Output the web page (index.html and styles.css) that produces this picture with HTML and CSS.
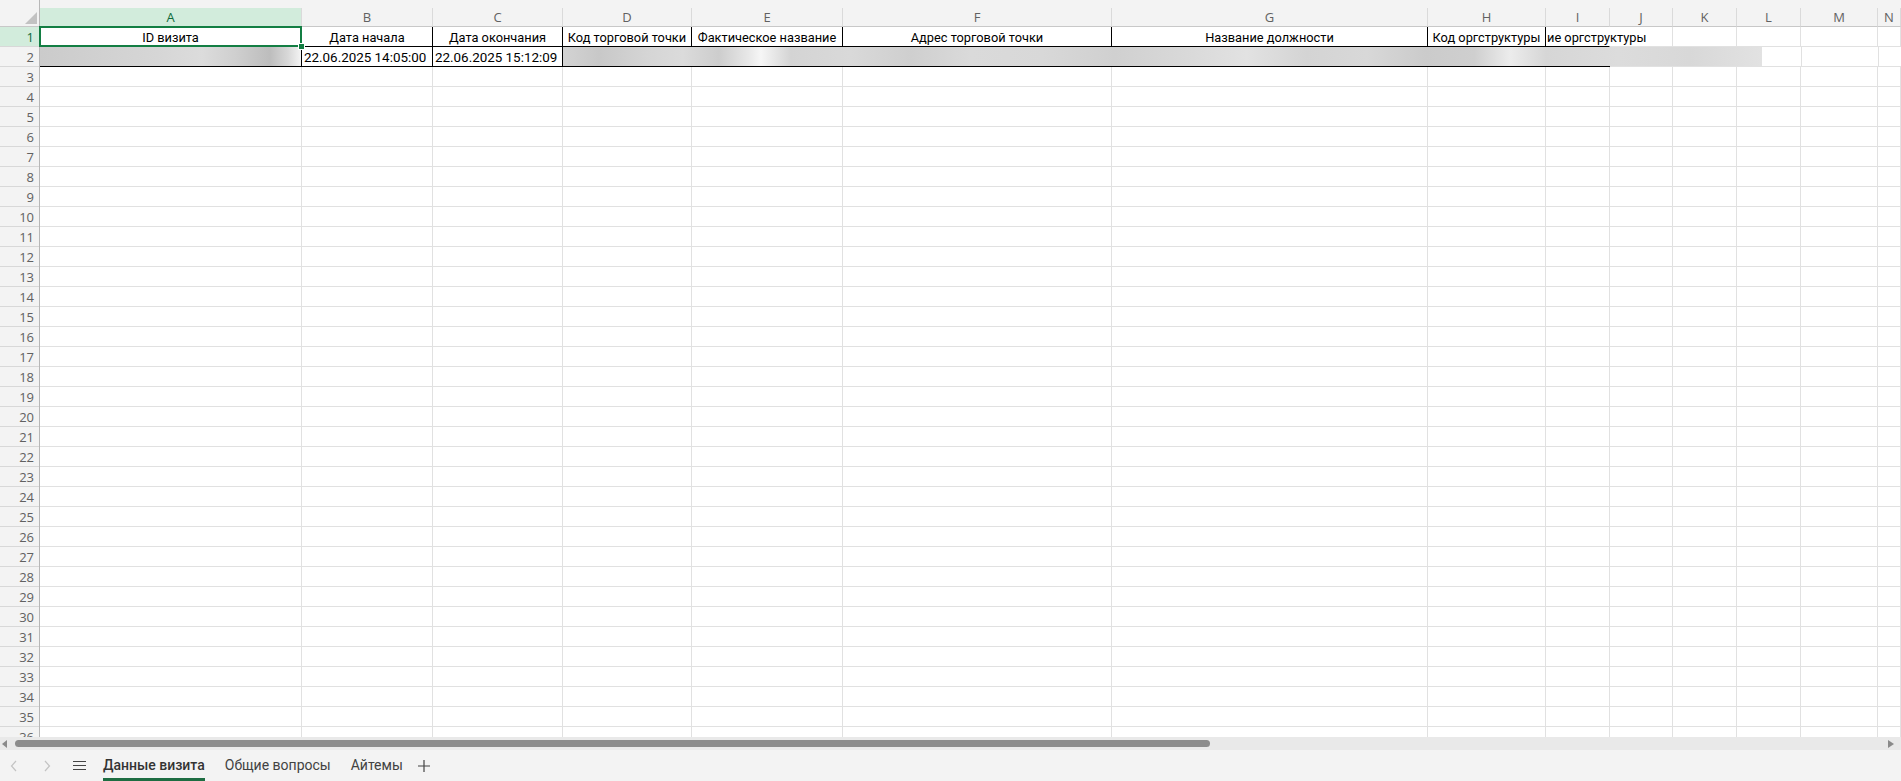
FILE: index.html
```html
<!DOCTYPE html>
<html lang="ru">
<head>
<meta charset="utf-8">
<title>Данные визита</title>
<link rel="stylesheet" href="styles.css">
</head>
<body>
<div class="app">
  <div class="sheet">
    <div class="topstrip"><div class="ts-corner"></div><div class="ts-rest"></div></div>
    <div class="colheads">
      <div class="corner">
        <svg width="40" height="19" viewBox="0 0 40 19"><polygon points="37,4 37,16 25,16" fill="#c2c2c2"/></svg>
      </div>
      <div class="ch w-a sel">A</div>
      <div class="ch w-b">B</div>
      <div class="ch w-c">C</div>
      <div class="ch w-d">D</div>
      <div class="ch w-e">E</div>
      <div class="ch w-f">F</div>
      <div class="ch w-g">G</div>
      <div class="ch w-h">H</div>
      <div class="ch w-i">I</div>
      <div class="ch w-j">J</div>
      <div class="ch w-k">K</div>
      <div class="ch w-l">L</div>
      <div class="ch w-m">M</div>
      <div class="ch w-n">N</div>
    </div>
    <div class="main">
      <div class="rowheads">
        <div class="rh sel">1</div><div class="rh">2</div><div class="rh">3</div><div class="rh">4</div>
        <div class="rh">5</div><div class="rh">6</div><div class="rh">7</div><div class="rh">8</div>
        <div class="rh">9</div><div class="rh">10</div><div class="rh">11</div><div class="rh">12</div>
        <div class="rh">13</div><div class="rh">14</div><div class="rh">15</div><div class="rh">16</div>
        <div class="rh">17</div><div class="rh">18</div><div class="rh">19</div><div class="rh">20</div>
        <div class="rh">21</div><div class="rh">22</div><div class="rh">23</div><div class="rh">24</div>
        <div class="rh">25</div><div class="rh">26</div><div class="rh">27</div><div class="rh">28</div>
        <div class="rh">29</div><div class="rh">30</div><div class="rh">31</div><div class="rh">32</div>
        <div class="rh">33</div><div class="rh">34</div><div class="rh">35</div><div class="rh">36</div>
      </div>
      <div class="cells">
        <div class="row">
          <div class="c w-a center bb br">ID визита</div>
          <div class="c w-b center bb br">Дата начала</div>
          <div class="c w-c center bb br">Дата окончания</div>
          <div class="c w-d center bb br">Код торговой точки</div>
          <div class="c w-e center bb br">Фактическое название</div>
          <div class="c w-f center bb br">Адрес торговой точки</div>
          <div class="c w-g center bb br">Название должности</div>
          <div class="c w-h center bb br">Код оргструктуры</div>
          <div class="c w-i bb nobr overflow">ие оргструктуры</div>
          <div class="c w-j"></div>
          <div class="c w-k"></div>
          <div class="c w-l"></div>
          <div class="c w-m"></div>
          <div class="c w-n"></div>
        </div>
        <div class="row">
          <div class="c w-a bb br blur-a"></div>
          <div class="c w-b bb br num">22.06.2025 14:05:00</div>
          <div class="c w-c bb br num">22.06.2025 15:12:09</div>
          <div class="c blur-wide"></div>
          <div class="c w-l-rest"></div>
          <div class="c w-m"></div>
          <div class="c w-n"></div>
        </div>
        <div class="rest">
          <div class="col w-a"></div>
          <div class="col w-b"></div>
          <div class="col w-c"></div>
          <div class="col w-d"></div>
          <div class="col w-e"></div>
          <div class="col w-f"></div>
          <div class="col w-g"></div>
          <div class="col w-h"></div>
          <div class="col w-i"></div>
          <div class="col w-j"></div>
          <div class="col w-k"></div>
          <div class="col w-l"></div>
          <div class="col w-m"></div>
          <div class="col w-n"></div>
        </div>
        <div class="selection"></div>
        <div class="handle"></div>
      </div>
    </div>
  </div>
  <div class="hscroll">
    <svg class="arr-l" width="8" height="12" viewBox="0 0 8 12"><polygon points="6,2 6,10 1,6" fill="#8a8a8a"/></svg>
    <div class="thumb"></div>
    <svg class="arr-r" width="10" height="12" viewBox="0 0 10 12"><polygon points="2,2 2,10 8,6" fill="#8a8a8a"/></svg>
  </div>
  <div class="tabbar">
    <svg class="nav nav-prev" width="8" height="12" viewBox="0 0 8 12"><polyline points="6,1 1.5,6 6,11" fill="none" stroke="#c3c3c3" stroke-width="1.2"/></svg>
    <svg class="nav nav-next" width="8" height="12" viewBox="0 0 8 12"><polyline points="2,1 6.5,6 2,11" fill="none" stroke="#c3c3c3" stroke-width="1.2"/></svg>
    <svg class="menu" width="13" height="11" viewBox="0 0 13 11"><path d="M0 1.5H13M0 5.5H13M0 9.5H13" stroke="#444" stroke-width="1.2"/></svg>
    <div class="tab active">Данные визита</div>
    <div class="tab">Общие вопросы</div>
    <div class="tab">Айтемы</div>
    <svg class="plus" width="12" height="12" viewBox="0 0 12 12"><path d="M6 0V12M0 6H12" stroke="#444" stroke-width="1.2"/></svg>
  </div>
</div>
</body>
</html>
```
FILE: styles.css
```css
* { box-sizing: border-box; }
html, body { margin: 0; padding: 0; }
body {
  width: 1901px;
  height: 781px;
  overflow: hidden;
  background: #ffffff;
  font-family: "Open Sans", "Noto Sans", "DejaVu Sans", sans-serif;
}
.app { display: flex; flex-direction: column; width: 1901px; height: 781px; }

.sheet { height: 737px; overflow: hidden; display: flex; flex-direction: column; flex: none; }

.topstrip { height: 8px; display: flex; background: #f3f3f3; flex: none; }
.ts-corner { width: 40px; border-right: 1px solid #b7b7b7; }
.ts-rest { flex: 1; }

.colheads { height: 19px; display: flex; background: #f3f3f3; flex: none; }
.corner { width: 40px; border-right: 1px solid #b7b7b7; border-bottom: 1px solid #c8c8c8; flex: none; }
.corner svg { display: block; }
.ch {
  flex: none;
  height: 19px;
  border-right: 1px solid #dadada;
  border-bottom: 1px solid #c8c8c8;
  color: #616161;
  font-size: 13px;
  line-height: 18px;
  text-align: center;
}
.ch.sel { background: #d2ecdc; color: #0f6b3b; border-bottom-color: #c8c8c8; }

.w-a { width: 262px; }
.w-b { width: 131px; }
.w-c { width: 130px; }
.w-d { width: 129px; }
.w-e { width: 151px; }
.w-f { width: 269px; }
.w-g { width: 316px; }
.w-h { width: 118px; }
.w-i { width: 64px; }
.w-j { width: 63px; }
.w-k { width: 64px; }
.w-l { width: 64px; }
.w-m { width: 77px; }
.w-n { width: 23px; }

.main { display: flex; flex: none; }
.rowheads { width: 40px; flex: none; background: #f3f3f3; border-right: 1px solid #b7b7b7; }
.rh {
  height: 20px;
  border-bottom: 1px solid #d8d8d8;
  color: #616161;
  font-size: 13px;
  line-height: 20px;
  text-align: right;
  padding-right: 5px;
}
.rh.sel { background: #d2ecdc; color: #0f6b3b; }

.cells { position: relative; flex: none; width: 1861px; }
.row { display: flex; height: 20px; }
.c {
  flex: none;
  height: 20px;
  border-right: 1px solid #e1e1e1;
  border-bottom: 1px solid #e1e1e1;
  font-family: Roboto, "Open Sans", sans-serif;
  font-size: 12.8px;
  color: #000;
  line-height: 19px;
  padding: 1px 2px 0 2px;
  white-space: nowrap;
  overflow: hidden;
}
.c.num { font-size: 13.4px; padding-left: 2px; }
.c.center { text-align: center; padding-left: 0; padding-right: 0; }
.c.bb { border-bottom-color: #000; }
.c.br { border-right-color: #000; }
.c.nobr { border-right-color: transparent; }
.c.overflow { overflow: visible; position: relative; z-index: 1; padding-left: 1px; }

.blur-a {
  background: linear-gradient(90deg, #cbcbcb 0%, #d0d0d0 20%, #d6d6d6 45%, #dcdcdc 62%, #cfcfcf 75%, #bdbdbd 88%, #d8d8d8 95%, #f4f4f4 100%);
}
.blur-wide {
  width: 1199px;
  border-right: none;
  border-bottom: none;
  background:
    linear-gradient(90deg, #000 0, #000 1047px, #e1e1e1 1047px) bottom / 100% 1px no-repeat,
    linear-gradient(90deg, #d3d3d3 0%, #c8c8c8 3%, #d5d5d5 7%, #dbdbdb 10%, #cdcdcd 13%, #e8e8e8 15.5%, #f6f6f6 16.5%, #d4d4d4 19%, #d9d9d9 24%, #cfcfcf 29%, #dadada 34%, #d8d8d8 40%, #d0d0d0 46%, #d9d9d9 52%, #e2e2e2 57%, #d4d4d4 62%, #d8d8d8 67%, #cbcbcb 72%, #cfcfcf 76%, #ececec 79%, #d6d6d6 82%, #dcdcdc 88%, #d8d8d8 94%, #e2e2e2 100%);
}
.w-l-rest { width: 40px; }

.rest { display: flex; height: 680px; }
.col {
  flex: none;
  height: 680px;
  border-right: 1px solid #e1e1e1;
  background: repeating-linear-gradient(to bottom, transparent 0, transparent 19px, #e1e1e1 19px, #e1e1e1 20px);
}

.selection {
  position: absolute;
  left: -1px;
  top: -1px;
  width: 263px;
  height: 21px;
  border: 2px solid #137e43;
  z-index: 3;
  pointer-events: none;
}
.handle {
  position: absolute;
  left: 258px;
  top: 16px;
  width: 7px;
  height: 7px;
  background: #137e43;
  border: 1px solid #ffffff;
  z-index: 4;
}

.hscroll {
  height: 13px;
  flex: none;
  background: #e9e9e9;
  display: flex;
  align-items: center;
  position: relative;
}
.arr-l { margin-left: 1px; flex: none; }
.thumb { margin-left: 6px; width: 1195px; height: 7px; border-radius: 4px; background: #8c8c8c; flex: none; }
.arr-r { margin-left: auto; margin-right: 5px; flex: none; }

.tabbar {
  flex: 1;
  background: #f3f3f3;
  display: flex;
  align-items: center;
  position: relative;
}
.nav { flex: none; }
.nav-prev { margin-left: 10px; }
.nav-next { margin-left: 25px; }
.menu { margin-left: 22px; flex: none; }
.tab {
  flex: none;
  font-family: Roboto, "Open Sans", sans-serif;
  font-size: 14px;
  color: #424242;
  height: 31px;
  line-height: 29px;
  margin-left: 20px;
  padding-top: 1px;
}
.menu + .tab { margin-left: 17px; }
.tab.active {
  font-weight: 500;
  color: #333;
  border-bottom: 3px solid #1e6d42;
}
.plus { margin-left: 15px; flex: none; }
```
